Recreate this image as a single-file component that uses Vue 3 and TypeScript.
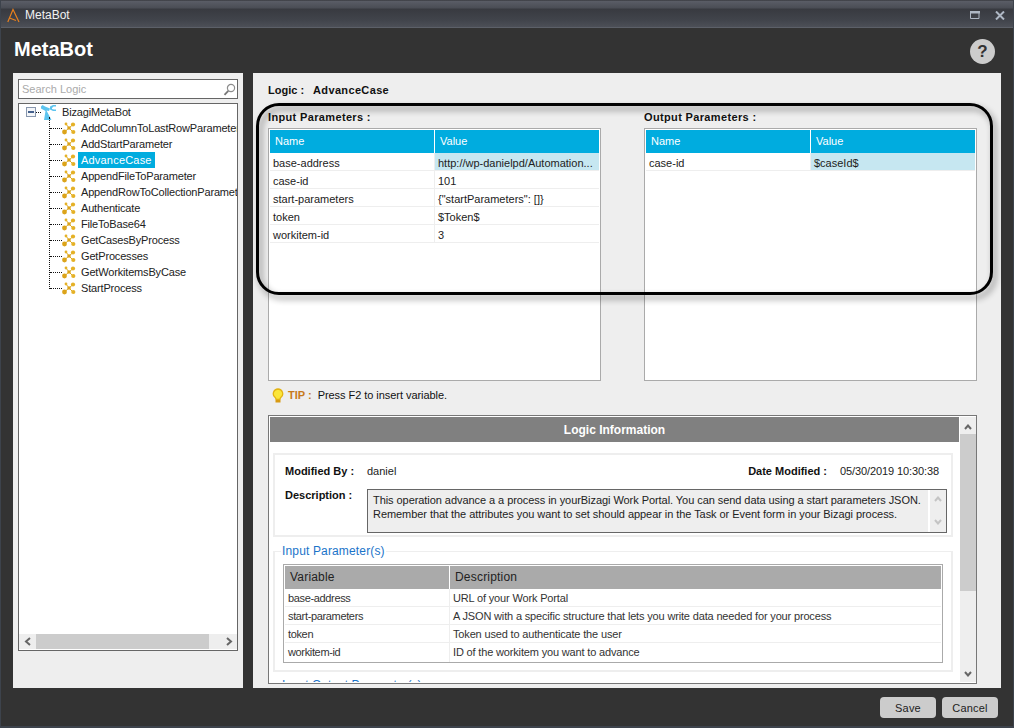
<script setup lang="ts">
const logics: string[] = [
  'AddColumnToLastRowParameter', 'AddStartParameter', 'AdvanceCase', 'AppendFileToParameter',
  'AppendRowToCollectionParameter', 'Authenticate', 'FileToBase64', 'GetCasesByProcess',
  'GetProcesses', 'GetWorkitemsByCase', 'StartProcess',
]
const inputs = [
  { name: 'base-address', value: 'http://wp-danielpd/Automation...' },
  { name: 'case-id', value: '101' },
  { name: 'start-parameters', value: '{"startParameters": []}' },
  { name: 'token', value: '$Token$' },
  { name: 'workitem-id', value: '3' },
]
const outputs = [{ name: 'case-id', value: '$caseId$' }]
const variables = [
  { name: 'base-address', text: 'URL of your Work Portal' },
  { name: 'start-parameters', text: 'A JSON with a specific structure that lets you write data needed for your process' },
  { name: 'token', text: 'Token used to authenticate the user' },
  { name: 'workitem-id', text: 'ID of the workitem you want to advance' },
]
</script>

<template>
  <div class="window">
    <header class="titlebar">
      <svg class="logo" width="13" height="15" viewBox="0 0 13 15" fill="none">
        <path d="M.8 14 6 1.500 12 14M2.500 10 9 12.500" stroke="#e8801e" stroke-width="1.200" />
      </svg>
      <span class="title-text">MetaBot</span>
      <span class="spacer"></span>
      <svg class="win-btn" width="10" height="8" viewBox="0 0 10 8"><path d="M.5.5h8.500v7H.5z" fill="none" stroke="#aeb7c4" /><path d="M0 0h10v2.500H0z" fill="#aeb7c4" /></svg>
      <svg class="win-btn close" width="10" height="9" viewBox="0 0 10 9"><path d="M1 .5 9 8.500M9 .5 1 8.500" stroke="#aeb7c4" stroke-width="2" /></svg>
    </header>

    <div class="heading">
      <h1>MetaBot</h1>
      <span class="help">?</span>
    </div>

    <main class="columns">
      <aside class="left">
        <div class="search">
          <span>Search Logic</span>
          <svg width="13" height="13" viewBox="0 0 13 13" fill="none"><circle cx="8" cy="5" r="3.600" stroke="#8d8d8d" stroke-width="1.200" /><path d="M5.300 7.800 1.500 11.800" stroke="#777" stroke-width="1.800" /></svg>
        </div>
        <div class="tree">
          <div class="tree-body">
            <div class="root-row">
              <span class="minus"></span>
              <span class="dots-h"></span>
              <svg class="robot" width="15" height="15" viewBox="0 0 15 15">
                <path d="M0 1.500 1.500 0 4 1.500 9 3.500 8 6 5.500 5.500 10.500 15H3L4.500 6 0 3.500z" fill="#5cc4ef" />
                <path d="M9 1.500 12 0h3v1.500h-2.500L11 3v1l2 .5H15V6h-3L9 4.500z" fill="#5cc4ef" />
              </svg>
              <span class="root-label">BizagiMetaBot</span>
            </div>
            <div v-for="item in logics" :key="item" class="leaf">
              <span class="dots-h short"></span>
              <svg class="node" width="14" height="13" viewBox="0 0 14 13">
                <path d="M2.500 10 7 6 11 2.500M7 6 11 10M7 6 4 2" stroke="#dcab24" stroke-width="1" />
                <circle cx="2.500" cy="10" r="2.400" fill="#dca41a" />
                <circle cx="11" cy="2.500" r="2.100" fill="#e5b126" />
                <circle cx="11.300" cy="10" r="2.100" fill="#e5b126" />
                <circle cx="4" cy="2" r="1.400" fill="#e5b126" />
                <circle cx="7" cy="6" r="1.800" fill="#dca41a" />
              </svg>
              <span class="leaf-label" :class="{ selected: item === 'AdvanceCase' }">{{ item }}</span>
            </div>
          </div>
          <div class="hscroll">
            <svg width="8" height="9" viewBox="0 0 8 9"><path d="M6 1 2 4.500 6 8" fill="none" stroke="#666" stroke-width="2" /></svg>
            <span class="hthumb"></span>
            <svg class="hnext" width="8" height="9" viewBox="0 0 8 9"><path d="M2 1 6 4.500 2 8" fill="none" stroke="#666" stroke-width="2" /></svg>
          </div>
        </div>
      </aside>

      <section class="right">
        <div class="logic-line"><b>Logic :</b><b class="logic-name">AdvanceCase</b></div>

        <div class="param-columns">
          <div class="param">
            <div class="param-label">Input Parameters :</div>
            <div class="param-table">
              <div class="p-head"><span>Name</span><span>Value</span></div>
              <div v-for="(row, i) in inputs" :key="row.name" class="p-row">
                <span>{{ row.name }}</span>
                <span :class="{ active: i === 0 }">{{ row.value }}</span>
              </div>
            </div>
          </div>
          <div class="param">
            <div class="param-label">Output Parameters :</div>
            <div class="param-table">
              <div class="p-head"><span>Name</span><span>Value</span></div>
              <div v-for="row in outputs" :key="row.name" class="p-row">
                <span>{{ row.name }}</span>
                <span class="active">{{ row.value }}</span>
              </div>
            </div>
          </div>
        </div>

        <div class="tip">
          <svg width="12" height="15" viewBox="0 0 12 15"><path d="M6 1a4.700 4.700 0 0 0-3 8.300c.6.500 1 1.200 1 2h4c0-.8.400-1.500 1-2A4.700 4.700 0 0 0 6 1z" fill="#fbe63a" stroke="#e3b312" stroke-width="1.300" /><path d="M3.500 12h5v2.500h-5z" fill="#d89a12" /></svg>
          <b>TIP :</b>
          <span>Press F2 to insert variable.</span>
        </div>

        <div class="info">
          <div class="info-main">
            <div class="info-title">Logic Information</div>
            <div class="meta-box">
              <div class="meta-top">
                <b class="meta-key">Modified By :</b>
                <span>daniel</span>
                <span class="spacer"></span>
                <b class="date-key">Date Modified :</b>
                <span class="date-value">05/30/2019 10:30:38</span>
              </div>
              <div class="meta-desc">
                <b class="meta-key">Description :</b>
                <div class="desc-box">
                  <p>This operation advance a a process in yourBizagi Work Portal. You can send data using a start parameters JSON.<br>Remember that the attributes you want to set should appear in the Task or Event form in your Bizagi process.</p>
                  <div class="desc-scroll">
                    <svg width="8" height="6" viewBox="0 0 8 6"><path d="M1 5 4 1.500 7 5" fill="none" stroke="#c4c4c4" stroke-width="2" /></svg>
                    <svg width="8" height="6" viewBox="0 0 8 6"><path d="M1 1 4 4.500 7 1" fill="none" stroke="#c4c4c4" stroke-width="2" /></svg>
                  </div>
                </div>
              </div>
            </div>
            <fieldset class="vars">
              <legend>Input Parameter(s)</legend>
              <div class="v-table">
                <div class="v-head"><span>Variable</span><span>Description</span></div>
                <div v-for="v in variables" :key="v.name" class="v-row">
                  <span class="v-name">{{ v.name }}</span>
                  <span class="v-text">{{ v.text }}</span>
                </div>
              </div>
            </fieldset>
            <div class="next-legend">Input Output Parameter(s)</div>
          </div>
          <div class="vscroll">
            <svg width="8" height="6" viewBox="0 0 8 6"><path d="M1 5 4 1.500 7 5" fill="none" stroke="#666" stroke-width="2" /></svg>
            <span class="vthumb"></span>
            <svg width="8" height="6" viewBox="0 0 8 6"><path d="M1 1 4 4.500 7 1" fill="none" stroke="#666" stroke-width="2" /></svg>
          </div>
        </div>

        <div class="callout"></div>
      </section>
    </main>

    <footer class="footer">
      <button type="button">Save</button>
      <button type="button">Cancel</button>
    </footer>
  </div>
</template>

<style>
html, body { margin: 0; background: #333; }
</style>

<style scoped>
* { box-sizing: border-box; }
.window {
  width: 1014px; height: 728px; display: flex; flex-direction: column; overflow: hidden;
  background: #333; border: 1px solid #3d434c; border-top: 0; border-bottom-width: 2px;
  font: 11px "Liberation Sans", Arial, sans-serif; color: #222;
}
.titlebar {
  height: 28px; flex: none; display: flex; align-items: center; padding: 2px 8px 0 6px;
  background: linear-gradient(#2b2c30 0, #5a5d66 1px, #4a4d55 8px, #383a40 9px, #41444b 20px, #4c4f57 27px, #5c6068 27px);
}
.logo { margin-right: 5px; }
.title-text { color: #f1f1f1; font-size: 12px; }
.spacer { flex: 1; }
.win-btn { margin-left: 15px; }
.heading { height: 45px; flex: none; display: flex; align-items: center; padding: 0 18px 0 13px; }
h1 { margin: 0; color: #fff; font-size: 20px; font-weight: 700; position: relative; top: -1px; }
.help {
  margin-left: auto; width: 25px; height: 25px; border-radius: 50%; background: #ccc; color: #333;
  font: 700 17px/25px "Liberation Sans", sans-serif; text-align: center; position: relative; top: 1px;
}
.columns { flex: none; height: 615px; display: flex; gap: 10px; padding-left: 12px; }
.left { width: 230px; background: #eee; padding: 6px 5px 0; }
.search {
  height: 20px; background: #fff; border: 1px solid #666; display: flex; align-items: center;
  justify-content: space-between; padding: 0 1px 0 3px; color: #aaa;
}
.tree { margin-top: 4px; height: 548px; border: 1px solid #666; background: #fff; display: flex; flex-direction: column; }
.tree-body { flex: 1; min-height: 0; overflow: hidden; position: relative; white-space: nowrap; letter-spacing: -.17px; }
.tree-body::before {
  content: ""; position: absolute; left: 30px; top: 13px; height: 172px; border-left: 1px dotted #111;
}
.root-row { height: 16px; display: flex; align-items: center; padding-left: 7px; }
.minus {
  flex: none; width: 10px; height: 10px; border: 1px solid #8796ad; position: relative; background: #f3f5f8;
}
.minus::after { content: ""; position: absolute; left: 1px; right: 1px; top: 3px; height: 2px; background: #44608c; }
.dots-h { flex: none; width: 5px; border-top: 1px dotted #111; }
.robot { flex: none; margin-right: 6px; }
.root-label { color: #222; }
.leaf { height: 16px; display: flex; align-items: center; padding-left: 31px; }
.dots-h.short { width: 12px; }
.node { flex: none; }
.leaf-label { flex: none; margin-left: 2px; padding: 0 3px; height: 16px; line-height: 16px; color: #222; }
.leaf-label.selected { background: #00acdf; color: #fff; letter-spacing: .2px; }
.hscroll {
  height: 15px; margin-bottom: 1px; flex: none; background: #eee; display: grid;
  grid-template-columns: 17px 173px 1fr; align-items: center; justify-items: center;
}
.hthumb { width: 173px; height: 15px; background: #ccc; }
.hnext { justify-self: end; margin-right: 4px; }
.right { width: 748px; background: #eee; position: relative; padding: 0 24px 0 15px; }
.logic-line { height: 28px; display: flex; gap: 9px; align-items: center; padding-top: 6px; color: #111; }
.logic-name { letter-spacing: .35px; }
.param-columns { display: flex; gap: 43px; }
.param { width: 333px; }
.param-label { height: 27px; padding-top: 9px; font-weight: 700; color: #111; line-height: 14px; letter-spacing: .35px; }
.param-table { height: 253px; border: 1px solid #aaa; background: #fff; padding: 1px; }
.p-head { height: 23px; display: grid; grid-template-columns: 164px 1fr; background: #00acdf; color: #fff; line-height: 23px; }
.p-head span { padding-left: 5px; }
.p-head span + span { border-left: 1px solid #fff; }
.p-row { height: 18px; display: grid; grid-template-columns: 164px 1fr; grid-template-rows: 17px; border-bottom: 1px solid #eee; line-height: 20px; color: #222; }
.p-row span { padding-left: 3px; overflow: hidden; white-space: nowrap; }
.p-row span + span { border-left: 1px solid #eee; padding-left: 3px; }
.p-row .active { background: #c6e7f1; }
.tip { height: 34px; display: flex; align-items: center; padding: 0 0 6px 4px; color: #111; }
.tip svg { margin-right: 4px; }
.tip b { color: #c77a1c; margin-right: 6px; }
.tip span { letter-spacing: -.05px; }
.info { height: 269px; border: 1px solid #777; background: #fff; display: flex; overflow: hidden; padding: 1px; }
.info-main { width: 689px; overflow: hidden; flex: none; }
.info-title { height: 25px; background: #808080; color: #fff; font-size: 12px; font-weight: 700; text-align: center; line-height: 27px; }
.meta-box { margin: 11px 6px 0 3px; height: 84px; border: 2px solid #eee; padding: 0 4px 0 10px; }
.meta-top { height: 30px; display: flex; align-items: center; padding: 2px 8px 0 0; color: #222; }
.meta-key { width: 82px; flex: none; color: #111; }
.date-key { color: #111; margin-right: 13px; }
.date-value { letter-spacing: -.1px; }
.meta-desc { display: flex; align-items: flex-start; margin-top: 1px; }
.meta-desc .meta-key { padding-top: 3px; }
.desc-box { width: 580px; flex: none; height: 44px; border: 1px solid #666; background: #eee; display: flex; margin-top: 3px; }
.desc-box p { margin: 0; flex: 1; padding: 3px 0 0 5px; line-height: 14px; color: #222; white-space: nowrap; letter-spacing: -.06px; }
.desc-scroll { flex: none; width: 18px; border-left: 2px solid #fff; display: flex; flex-direction: column; justify-content: space-between; align-items: center; padding: 6px 0 7px; }
.vars { margin: 8px 6px 0 3px; height: 127px; border: 2px solid #eee; border-width: 1px 2px 2px; padding: 0 8px; min-width: 0; }
legend { color: #1b74c9; font-size: 12px; padding: 0 1px; margin-left: -2px; line-height: 13px; letter-spacing: .15px; }
.v-table { border: 1px solid #aaa; padding: 1px; margin-top: 6px; height: 99px; }
.v-head { height: 23px; display: grid; grid-template-columns: 164px 1fr; background: #aaa; color: #222; font-size: 12px; line-height: 23px; letter-spacing: .2px; }
.v-head span { padding-left: 5px; }
.v-head span + span { border-left: 1px solid #fff; }
.v-row { height: 18px; display: grid; grid-template-columns: 164px 1fr; border-bottom: 1px solid #eee; line-height: 19px; color: #333; }
.v-row:last-child { border-bottom: 0; }
.v-name { padding-left: 3px; letter-spacing: -.35px; }
.v-text { padding-left: 3px; border-left: 1px solid #eee; letter-spacing: -.16px; }
.next-legend { color: #1b74c9; font-size: 12px; margin: 7px 0 0 12px; line-height: 13px; }
.vscroll { width: 16px; margin-left: 1px; background: #eee; display: flex; flex-direction: column; align-items: center; flex: none; padding: 7px 0 5px; }
.vthumb { width: 16px; height: 157px; background: #ccc; margin: 4px 0 auto; }
.callout {
  position: absolute; left: 3px; top: 30px; width: 737px; height: 192px;
  border: 3px solid #000; border-radius: 23px; pointer-events: none;
  filter: drop-shadow(3px 4px 3px rgba(0, 0, 0, .45));
}
.footer { flex: 1; display: flex; justify-content: flex-end; gap: 6px; padding: 9px 15px 0 0; }
button {
  width: 56px; height: 21px; border: 0; border-radius: 4px; background: #ccc; color: #222; padding: 0;
  font: 11px "Liberation Sans", Arial, sans-serif; letter-spacing: .2px;
}
</style>
